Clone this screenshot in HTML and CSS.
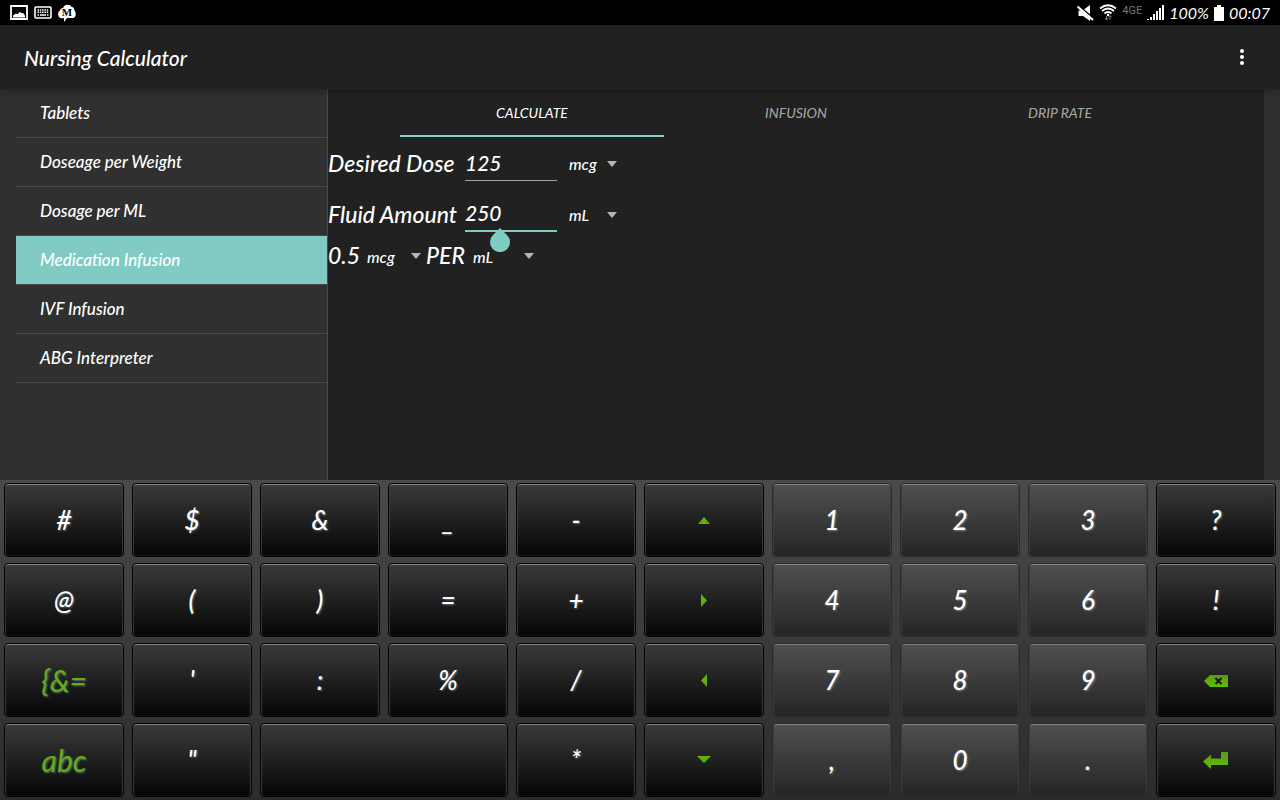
FILE: index.html
```html
<!DOCTYPE html>
<html lang="en">
<head>
  <meta charset="UTF-8" />
  <meta name="viewport" content="width=device-width, initial-scale=1.0"/>
  <title>Nursing Calculator</title>
  <link rel="stylesheet" href="styles.css">
</head>
<body>
  <div class="statusbar">
    <div class="notifications">
      <svg width="18" height="15" viewBox="0 0 18 15"><path d="M1 1h16v13H1z" fill="none" stroke="#fff" stroke-width="1.8"/><path d="M3 12.500v-2l3-2 1.500.8 2.500-2.500 1.500 1.500 1.500-.5 2 3v1.700z" fill="#fff"/></svg>
      <svg width="18" height="13" viewBox="0 0 18 13"><rect x="1" y="1" width="16" height="11" rx="1" fill="none" stroke="#fff" stroke-width="1.600"/><path d="M3.500 4h11M3.500 6.300h11" stroke="#fff" stroke-width="1.500" stroke-dasharray="1.500 .8"/><path d="M3.500 9h1.500M6 9h6M13 9h1.500" stroke="#fff" stroke-width="1.500"/></svg>
      <svg width="18" height="18" viewBox="0 0 18 18"><path d="M5 4C6 0 12-.5 13.500 3c2-.3 3 1.500 2.500 3 2.500 2 2.300 6.500-.5 8H9l-3 4v-4C2 15 0 13 .2 10.500 0 8 1 7 2 6.500 2 5 3.500 4 5 4z" fill="#fff"/><text class="badge-letter" x="9" y="12" text-anchor="middle">M</text></svg>
    </div>
    <div class="system">
      <svg width="17" height="16" viewBox="0 0 17 16"><path d="M1.500 5.500h4L13 0v16l-7-5H1.500z" fill="#fff"/><path d="M2 1 17 13.500" stroke="#000" stroke-width="1.500"/><path d="M.5 1.500 16 15" stroke="#fff" stroke-width="2.200"/></svg>
      <svg width="18" height="17" viewBox="0 0 18 17"><g fill="none" stroke="#fff" stroke-width="1.900"><path d="M1 4.500q8-6.500 16 0"/><path d="M3 7q6-5 12 0"/><path d="M5.500 9.500q3.500-3 7 0"/></g><circle cx="9" cy="11" r="1.200" fill="#fff"/><path d="M7.500 16v-4M6 14l1.500 2L9 14M11 11.500V16M9.500 13.500l1.500-2 1.500 2" fill="none" stroke="#777"/></svg>
      <span class="network">4GE</span>
      <svg width="17" height="15" viewBox="0 0 17 15"><path d="M0 15v-1h2v1zM3 15v-3h2v3zM6 15V9h2v6zM9 15V6h2v9zM12 15V3h2v12zM15 15V0h2v15z" fill="#fff"/></svg>
      <span class="charge">100%</span>
      <svg width="10" height="16" viewBox="0 0 10 16"><path d="M3 0h4v2h3v14H0V2h3z" fill="#fff"/></svg>
      <span class="time">00:07</span>
    </div>
  </div>

  <header class="appbar">
    <h1>Nursing Calculator</h1>
    <button class="overflow" aria-label="More options">
      <svg width="4" height="16" viewBox="0 0 4 16"><g fill="#fff"><circle cx="2" cy="2" r="2"/><circle cx="2" cy="8" r="2"/><circle cx="2" cy="14" r="2"/></g></svg>
    </button>
  </header>

  <div class="workspace">
    <nav class="sidebar">
      <a href="#tablets">Tablets</a>
      <a href="#weight">Doseage per Weight</a>
      <a href="#ml">Dosage per ML</a>
      <a href="#medication" class="active">Medication Infusion</a>
      <a href="#ivf">IVF Infusion</a>
      <a href="#abg">ABG Interpreter</a>
    </nav>

    <main class="panel">
      <div class="tabs">
        <button class="tab active">CALCULATE</button>
        <button class="tab">INFUSION</button>
        <button class="tab">DRIP RATE</button>
      </div>

      <form class="calc">
        <div class="row">
          <label for="dose">Desired Dose</label>
          <div class="field"><input type="text" id="dose" value="125"></div>
          <div class="spinner">
            <select aria-label="Dose unit"><option>mcg</option><option>mg</option></select>
          </div>
        </div>
        <div class="row">
          <label for="fluid">Fluid Amount</label>
          <div class="field focused">
            <input type="text" id="fluid" value="250">
            <svg class="handle" width="20" height="24" viewBox="0 0 20 24"><path d="M10 0 17 7a10 10 0 1 1-14 0z" fill="#80cbc4"/></svg>
          </div>
          <div class="spinner">
            <select aria-label="Fluid unit"><option>mL</option><option>L</option></select>
          </div>
        </div>
        <div class="row result">
          <output for="dose fluid">0.5</output>
          <div class="spinner">
            <select aria-label="Result dose unit"><option>mcg</option><option>mg</option></select>
          </div>
          <span class="per">PER</span>
          <div class="spinner wide">
            <select aria-label="Result fluid unit"><option>mL</option><option>L</option></select>
          </div>
        </div>
      </form>
    </main>
  </div>

  <div class="keyboard">
    <button class="key">#</button>
    <button class="key">$</button>
    <button class="key">&amp;</button>
    <button class="key">_</button>
    <button class="key">-</button>
    <button class="key" aria-label="Up"><svg width="14" height="8" viewBox="0 0 14 8"><path d="M1 8 7 1l6 7z" fill="#5fae12"/></svg></button>
    <button class="key num">1</button>
    <button class="key num">2</button>
    <button class="key num">3</button>
    <button class="key">?</button>

    <button class="key">@</button>
    <button class="key">(</button>
    <button class="key">)</button>
    <button class="key">=</button>
    <button class="key">+</button>
    <button class="key" aria-label="Right"><svg width="8" height="14" viewBox="0 0 8 14"><path d="M1 1v13l6-6.500z" fill="#5fae12"/></svg></button>
    <button class="key num">4</button>
    <button class="key num">5</button>
    <button class="key num">6</button>
    <button class="key">!</button>

    <button class="key mode">{&amp;=</button>
    <button class="key">'</button>
    <button class="key">:</button>
    <button class="key">%</button>
    <button class="key">/</button>
    <button class="key" aria-label="Left"><svg width="8" height="14" viewBox="0 0 8 14"><path d="M7 1v13L1 7.500z" fill="#5fae12"/></svg></button>
    <button class="key num">7</button>
    <button class="key num">8</button>
    <button class="key num">9</button>
    <button class="key" aria-label="Backspace"><svg width="24" height="13" viewBox="0 0 24 13"><defs><linearGradient id="green" x2="0" y2="1"><stop stop-color="#5a9a1c"/><stop offset="1" stop-color="#62c000"/></linearGradient></defs><path d="M0 7 6 1h18v12H6z" fill="url(#green)"/><path d="m11.500 4 6 6M17.500 4l-6 6" stroke="#1b1b1b" stroke-width="2.200"/></svg></button>

    <button class="key mode">abc</button>
    <button class="key">"</button>
    <button class="key space" aria-label="Space"></button>
    <button class="key">*</button>
    <button class="key" aria-label="Down"><svg width="14" height="8" viewBox="0 0 14 8"><path d="M0 0h14L7 7z" fill="#5fae12"/></svg></button>
    <button class="key num">,</button>
    <button class="key num">0</button>
    <button class="key num">.</button>
    <button class="key" aria-label="Enter"><svg width="26" height="18" viewBox="0 0 26 18"><path d="M0 10.500 8 3.500v4h10V1h7v13H8v4z" fill="url(#green)"/></svg></button>
  </div>
</body>
</html>
```

FILE: styles.css
```css
* {
  margin: 0;
  padding: 0;
  box-sizing: border-box;
  font-family: 'Choco cooky', Lato, sans-serif;
}

body {
  min-height: 100vh;
  display: flex;
  flex-direction: column;
  background: #303030;
  color: #fff;
  font-style: italic;
  font-weight: 500;
}

button,
input,
select {
  border: none;
  background: none;
  color: inherit;
  font-style: inherit;
  font-weight: inherit;
  outline: none;
}

svg {
  display: block;
}

/* Status bar */
.statusbar {
  display: flex;
  align-items: center;
  justify-content: space-between;
  height: 25px;
  padding: 0 10px;
  background: #000;
  font-size: 16px;
  font-weight: 400;
}

.notifications {
  display: flex;
  align-items: center;
  gap: 6px;
}

.badge-letter {
  font: bold 11px 'Liberation Serif', serif;
}

.system {
  display: flex;
  align-items: center;
  gap: 5px;
}

.network {
  align-self: flex-start;
  padding-top: 1px;
  font: 11px Roboto, sans-serif;
  color: #777;
}

/* App bar */
.appbar {
  position: relative;
  z-index: 1;
  display: flex;
  align-items: center;
  justify-content: space-between;
  height: 64px;
  padding: 0 24px;
  background: #212121;
  box-shadow: 0 2px 8px rgba(0, 0, 0, 0.3);
}

.appbar h1 {
  font-size: 21px;
  font-weight: 500;
}

.overflow {
  padding: 12px;
  cursor: pointer;
}

/* Main area */
.workspace {
  flex: 1;
  display: flex;
  padding: 0 16px;
}

.sidebar {
  width: 312px;
  border-right: 1px solid #4a4a4a;
}

.sidebar a {
  display: block;
  padding: 0 24px;
  border-bottom: 1px solid #4a4a4a;
  font-size: 17px;
  line-height: 48px;
  color: #fff;
  text-decoration: none;
}

.sidebar a.active {
  background: #80cbc4;
}

.panel {
  flex: 1;
  background: #212121;
}

.tabs {
  display: flex;
  padding: 0 72px;
}

.tab {
  flex: 1;
  height: 48px;
  border-bottom: 2px solid transparent;
  font-size: 14px;
  font-weight: 400;
  color: #a8a8a8;
  cursor: pointer;
}

.tab.active {
  border-color: #80cbc4;
  color: #fff;
}

.row {
  display: flex;
  align-items: center;
  height: 51px;
  font-size: 23px;
}

.row label {
  width: 137px;
}

.field {
  position: relative;
  width: 92px;
  margin-right: 12px;
}

.field input {
  display: block;
  width: 100%;
  height: 36px;
  border-bottom: 1px solid #a0a0a0;
  font-size: 21px;
}

.field.focused input {
  border-bottom: 2px solid #80cbc4;
}

.handle {
  position: absolute;
  left: 25px;
  top: 32px;
}

.spinner {
  display: grid;
  align-items: center;
  width: 48px;
}

.spinner select,
.spinner::after {
  grid-area: 1 / 1;
}

.spinner select {
  appearance: none;
  font-size: 16px;
}

.spinner::after {
  content: '';
  justify-self: end;
  border: 5px solid transparent;
  border-top: 6px solid #b5b5b5;
  border-bottom: none;
  pointer-events: none;
}

.row > .spinner {
  padding-top: 2px;
}

.result {
  height: 32px;
}

.result output {
  width: 39px;
}

.result .spinner {
  width: 54px;
}

.result .spinner.wide {
  width: 61px;
}

.per {
  width: 52px;
  padding-left: 5px;
}

/* Keyboard */
.keyboard {
  display: grid;
  grid-template-columns: repeat(10, 1fr);
  grid-auto-rows: 74px;
  gap: 6px 8px;
  padding: 3px 4px;
  background: linear-gradient(#4a4a4a, #2b2b2b);
}

.key {
  display: flex;
  align-items: center;
  justify-content: center;
  border: 1px solid #000;
  border-radius: 4px;
  background: linear-gradient(#3a3a3a, #050505) padding-box;
  box-shadow: inset 0 1px 0 #858585, inset 1px 0 1px #3c3c3c, inset -1px 0 1px #3c3c3c;
  font-size: 26px;
  text-shadow: 1px 1px 2px rgba(255, 255, 255, 0.35);
  cursor: pointer;
}

.key.num {
  border-color: #2b2b2b;
  background: linear-gradient(#505050, #252525) padding-box;
}

.key.mode {
  font-size: 30px;
  font-weight: 400;
  color: #5fae12;
}

.key.space {
  grid-column: span 2;
}
```
